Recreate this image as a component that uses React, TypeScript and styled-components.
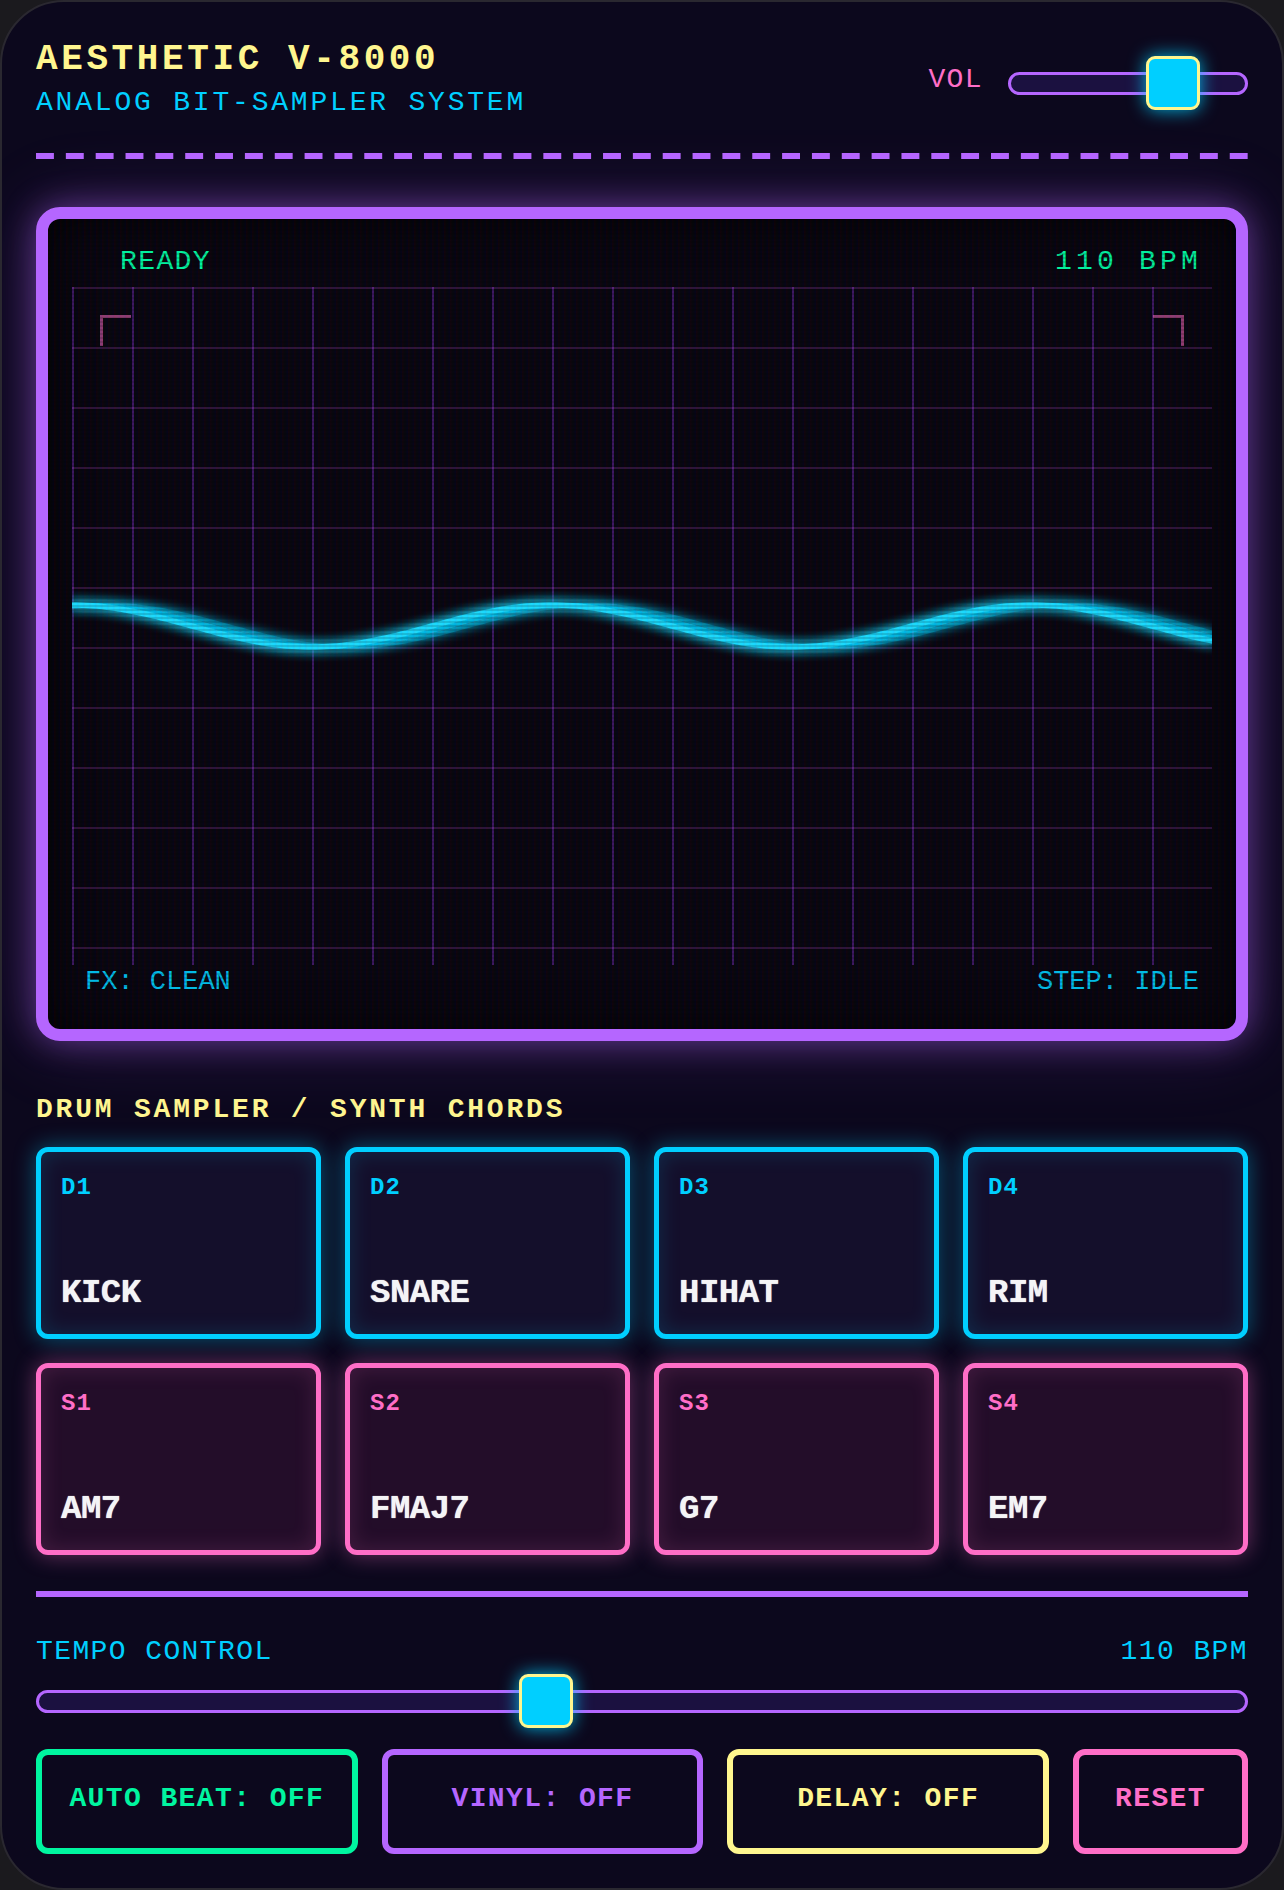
import { useState } from "react";
import styled, { createGlobalStyle } from "styled-components";

const COLOR = {
  page: "#1b1a1e",
  body: "#0c081d",
  screen: "#08050f",
  purple: "#b566ff",
  cyan: "#00cfff",
  pink: "#ff6ec7",
  yellow: "#fff68f",
  green: "#00f5a0",
  white: "#f4f4f6",
};

const GlobalStyle = createGlobalStyle`
  html, body {
    margin: 0;
    padding: 0;
    background: ${COLOR.page};
  }
  * {
    box-sizing: border-box;
  }
`;

const Machine = styled.div`
  min-height: 100vh;
  background: ${COLOR.body};
  border: 2px solid #2a2830;
  border-radius: 64px;
  padding: 37px 34px 34px;
  font-family: "Liberation Mono", "Courier New", monospace;
  overflow: hidden;
`;

// dashes 18px long, spread so the rule starts and ends on a dash
const Header = styled.header`
  display: flex;
  justify-content: space-between;
  align-items: center;
  padding-bottom: 41px;
  background-image: linear-gradient(90deg, ${COLOR.purple} 18px, transparent 18px);
  background-size: calc((100% + 12px) / 41) 6px;
  background-repeat: repeat-x;
  background-position: left bottom;
`;

const Title = styled.h1`
  margin: 0;
  font-size: 36px;
  font-weight: 700;
  line-height: normal;
  letter-spacing: 0.1em;
  color: ${COLOR.yellow};
`;

const Subtitle = styled.div`
  margin-top: 7px;
  font-size: 28px;
  letter-spacing: 0.1em;
  color: ${COLOR.cyan};
`;

const VolGroup = styled.div`
  display: flex;
  align-items: center;
  gap: 25px;
  margin-top: 9px;
`;

const VolLabel = styled.span`
  padding-bottom: 7px;
  font-size: 28px;
  letter-spacing: 0.05em;
  color: ${COLOR.pink};
`;

const Range = styled.input.attrs({ type: "range" })<{ $width?: string }>`
  -webkit-appearance: none;
  appearance: none;
  display: block;
  width: ${(p) => p.$width ?? "100%"};
  height: 54px;
  margin: 0;
  background: transparent;

  &::-webkit-slider-runnable-track {
    height: 23px;
    border: 3px solid ${COLOR.purple};
    border-radius: 999px;
    background: #1b1140;
  }

  &::-webkit-slider-thumb {
    -webkit-appearance: none;
    box-sizing: border-box;
    width: 54px;
    height: 54px;
    margin-top: -18.5px;
    border: 3px solid ${COLOR.yellow};
    border-radius: 9px;
    background: ${COLOR.cyan};
    box-shadow: 0 0 18px rgba(0, 207, 255, 0.85);
  }
`;

const Screen = styled.section`
  position: relative;
  margin-top: 48px;
  border: 12px solid ${COLOR.purple};
  border-radius: 24px;
  background: ${COLOR.screen};
  padding: 27px 24px 32px;
  box-shadow: 0 0 34px rgba(181, 102, 255, 0.45),
    0 0 80px rgba(181, 102, 255, 0.2), inset 0 0 40px rgba(0, 0, 0, 0.9);

  &::after {
    content: "";
    position: absolute;
    inset: 0;
    border-radius: 12px;
    pointer-events: none;
    background: linear-gradient(rgba(18, 16, 16, 0) 50%, rgba(0, 0, 0, 0.14) 50%),
      linear-gradient(
        90deg,
        rgba(255, 0, 0, 0.05),
        rgba(0, 255, 0, 0.015),
        rgba(0, 0, 255, 0.05)
      );
    background-size: 100% 4px, 6px 100%;
  }
`;

const TopBar = styled.div`
  display: flex;
  justify-content: space-between;
  padding: 0 10px 0 48px;
  margin-bottom: 10px;
  font-size: 28px;
`;

const Status = styled.span<{ $wide?: boolean }>`
  color: ${COLOR.green};
  letter-spacing: ${(p) => (p.$wide ? "0.15em" : "0.05em")};
`;

const GridArea = styled.div`
  position: relative;
  height: 678px;
  background-image: linear-gradient(rgba(200, 80, 220, 0.2) 2px, transparent 2px),
    linear-gradient(90deg, rgba(140, 60, 255, 0.36) 2px, transparent 2px);
  background-size: 60px 60px;
`;

const Bracket = styled.div<{ $side: "left" | "right" }>`
  position: absolute;
  top: 28px;
  ${(p) => p.$side}: 28px;
  width: 31px;
  height: 31px;
  border-top: 3px solid rgba(255, 110, 199, 0.55);
  ${(p) =>
    p.$side === "left"
      ? "border-left: 3px solid rgba(255, 110, 199, 0.55);"
      : "border-right: 3px solid rgba(255, 110, 199, 0.55);"}
`;

const Wave = styled.svg`
  display: block;
  width: 100%;
  height: 100%;
`;

const BottomBar = styled.div`
  display: flex;
  justify-content: space-between;
  margin-top: 2px;
  padding: 0 13px;
  font-size: 27px;
  color: #00bfea;
`;

const SectionTitle = styled.h2`
  margin: 53px 0 22px;
  font-size: 28px;
  font-weight: 700;
  line-height: normal;
  letter-spacing: 0.1em;
  color: ${COLOR.yellow};
`;

const PadGrid = styled.div`
  display: grid;
  grid-template-columns: repeat(4, 1fr);
  gap: 24px;
`;

type Tone = "drum" | "synth";

const TONE = {
  drum: { edge: COLOR.cyan, fill: "#140f2b", glow: "0, 207, 255" },
  synth: { edge: COLOR.pink, fill: "#230d29", glow: "255, 110, 199" },
};

const Pad = styled.button<{ $tone: Tone }>`
  height: 192px;
  display: flex;
  flex-direction: column;
  justify-content: space-between;
  align-items: flex-start;
  padding: 22px 20px;
  border: 5px solid ${(p) => TONE[p.$tone].edge};
  border-radius: 12px;
  background: ${(p) => TONE[p.$tone].fill};
  box-shadow: 0 0 22px rgba(${(p) => TONE[p.$tone].glow}, 0.4),
    inset 0 0 22px rgba(${(p) => TONE[p.$tone].glow}, 0.16);
  font-family: inherit;
  cursor: pointer;
  text-align: left;
`;

const PadKey = styled.span<{ $tone: Tone }>`
  font-size: 24px;
  font-weight: 700;
  letter-spacing: 0.05em;
  color: ${(p) => TONE[p.$tone].edge};
`;

const PadName = styled.span`
  font-size: 34px;
  font-weight: 700;
  letter-spacing: -0.5px;
  color: ${COLOR.white};
  text-shadow: 0 0 1px ${COLOR.white};
`;

const Divider = styled.hr`
  margin: 36px 0 0;
  height: 6px;
  border: none;
  background: ${COLOR.purple};
`;

const TempoRow = styled.div`
  display: flex;
  justify-content: space-between;
  margin: 39px 0 7px;
  font-size: 28px;
  letter-spacing: 0.05em;
  color: ${COLOR.cyan};
`;

const Controls = styled.div`
  display: grid;
  grid-template-columns: 1fr 1fr 1fr auto;
  gap: 24px;
  margin-top: 21px;
`;

const ControlButton = styled.button<{ $color: string; $inset?: number }>`
  height: 105px;
  padding: 0 ${(p) => p.$inset ?? 10}px 6px;
  border: 6px solid ${(p) => p.$color};
  border-radius: 12px;
  background: transparent;
  color: ${(p) => p.$color};
  font-family: inherit;
  font-size: 28px;
  font-weight: 700;
  letter-spacing: 0.05em;
  white-space: nowrap;
  cursor: pointer;
`;

const W = 1140;
const MID = 339;
const AMP = 21;
const LEN = 480;

const wavePath = (shift: number) => {
  let d = "";
  for (let x = 0; x <= W; x += 5) {
    const y = MID - AMP * Math.cos((2 * Math.PI * (x - shift)) / LEN);
    d += `${x === 0 ? "M" : "L"}${x} ${y.toFixed(1)} `;
  }
  return d;
};

const PADS: { key: string; name: string; tone: Tone }[] = [
  { key: "D1", name: "KICK", tone: "drum" },
  { key: "D2", name: "SNARE", tone: "drum" },
  { key: "D3", name: "HIHAT", tone: "drum" },
  { key: "D4", name: "RIM", tone: "drum" },
  { key: "S1", name: "AM7", tone: "synth" },
  { key: "S2", name: "FMAJ7", tone: "synth" },
  { key: "S3", name: "G7", tone: "synth" },
  { key: "S4", name: "EM7", tone: "synth" },
];

export default function App() {
  const [vol, setVol] = useState(75);
  const [tempo, setTempo] = useState(110);

  return (
    <>
      <GlobalStyle />
      <Machine>
        <Header>
          <div>
            <Title>AESTHETIC V-8000</Title>
            <Subtitle>ANALOG BIT-SAMPLER SYSTEM</Subtitle>
          </div>
          <VolGroup>
            <VolLabel>VOL</VolLabel>
            <Range
              $width="240px"
              min={0}
              max={100}
              value={vol}
              onChange={(e) => setVol(Number(e.target.value))}
            />
          </VolGroup>
        </Header>

        <Screen>
          <TopBar>
            <Status>READY</Status>
            <Status $wide>{tempo} BPM</Status>
          </TopBar>
          <GridArea>
            <Bracket $side="left" />
            <Bracket $side="right" />
            <Wave viewBox="0 0 1140 678" preserveAspectRatio="none">
              <defs>
                <filter id="glow" x="-5%" y="-50%" width="110%" height="200%">
                  <feGaussianBlur stdDeviation="6" result="blur" />
                  <feMerge>
                    <feMergeNode in="blur" />
                    <feMergeNode in="blur" />
                    <feMergeNode in="SourceGraphic" />
                  </feMerge>
                </filter>
              </defs>
              <g filter="url(#glow)" fill="none" strokeLinecap="round">
                <path d={wavePath(36)} stroke="#00cfff" strokeWidth="4" opacity="0.3" />
                <path d={wavePath(18)} stroke="#00cfff" strokeWidth="4" opacity="0.55" />
                <path d={wavePath(0)} stroke="#1adcff" strokeWidth="5.5" />
              </g>
            </Wave>
          </GridArea>
          <BottomBar>
            <span>FX: CLEAN</span>
            <span>STEP: IDLE</span>
          </BottomBar>
        </Screen>

        <SectionTitle>DRUM SAMPLER / SYNTH CHORDS</SectionTitle>
        <PadGrid>
          {PADS.map((pad) => (
            <Pad key={pad.key} $tone={pad.tone}>
              <PadKey $tone={pad.tone}>{pad.key}</PadKey>
              <PadName>{pad.name}</PadName>
            </Pad>
          ))}
        </PadGrid>

        <Divider />
        <TempoRow>
          <span>TEMPO CONTROL</span>
          <span>{tempo} BPM</span>
        </TempoRow>
        <Range
          min={60}
          max={180}
          value={tempo}
          onChange={(e) => setTempo(Number(e.target.value))}
        />

        <Controls>
          <ControlButton $color={COLOR.green}>AUTO BEAT: OFF</ControlButton>
          <ControlButton $color={COLOR.purple}>VINYL: OFF</ControlButton>
          <ControlButton $color={COLOR.yellow}>DELAY: OFF</ControlButton>
          <ControlButton $color={COLOR.pink} $inset={36}>
            RESET
          </ControlButton>
        </Controls>
      </Machine>
    </>
  );
}
